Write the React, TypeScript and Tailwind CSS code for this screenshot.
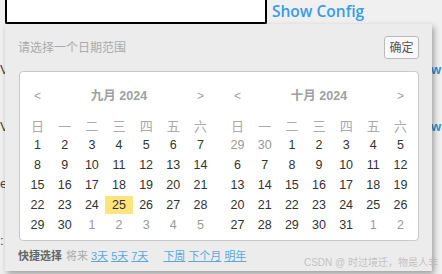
import React from "react";

type Cell = { n: number; other?: boolean; active?: boolean };

const week = ["日", "一", "二", "三", "四", "五", "六"];

function month(lead: number[], count: number, trail: number, active?: number): Cell[] {
  const cells: Cell[] = lead.map((n) => ({ n, other: true }));
  for (let i = 1; i <= count; i++) cells.push({ n: i, active: i === active });
  for (let i = 1; i <= trail; i++) cells.push({ n: i, other: true });
  return cells;
}

const sept = month([], 30, 5, 25);
const oct = month([29, 30], 31, 2);

const cjk = "font-['Liberation_Sans','Noto_Sans_CJK_SC',sans-serif]";

function Calendar({ title, cells }: { title: string; cells: Cell[] }) {
  return (
    <div className="w-[190px]">
      {/* month header */}
      <div className="grid grid-cols-7 h-[20px] items-center text-[#a0a0a0]">
        <span className="text-center text-[12px]">&lt;</span>
        <span className="col-span-5 text-center text-[12.5px] font-bold">{title}</span>
        <span className="text-center text-[12px]">&gt;</span>
      </div>
      {/* weekdays */}
      <div className="mt-[11px] grid grid-cols-7 h-[18px] items-center text-[13px] text-[#aaa]">
        {week.map((w) => (
          <span key={w} className="text-center">
            {w}
          </span>
        ))}
      </div>
      {/* days */}
      <div className="grid grid-cols-7">
        {cells.map((c, i) => (
          <div key={i} className="h-[20px] py-px">
            <div
              className={`h-[18px] flex items-center justify-center text-[12.5px] ${
                c.active ? "bg-[#fde47f]" : ""
              } ${c.other ? "text-[#999]" : "text-[#333]"}`}
            >
              {c.n}
            </div>
          </div>
        ))}
      </div>
    </div>
  );
}

export default function App() {
  return (
    <div className={`relative w-[442px] h-[274px] overflow-hidden bg-[#f0f0f0] ${cjk}`}>
      {/* top bar */}
      <div className="flex items-center h-[24px]">
        <div className="ml-[5px] w-[262px] h-[24px] bg-white border-2 border-t-0 border-black rounded-b-[2px]" />
        <span className="ml-[5px] text-[15.5px] font-semibold text-[#3b9be6] font-['Open_Sans',sans-serif]">
          Show Config
        </span>
      </div>

      {/* page content behind the dropdown */}
      <div className="mt-[17px] flex flex-col text-[13px]">
        {["V", "V", "e:", ":"].map((l, i) => (
          <div key={i} className="h-[57px] flex items-center justify-between">
            <span className="text-[#444]">{l}</span>
            {i < 2 && <span className="mr-px font-bold text-[#2f8fd8]">w</span>}
          </div>
        ))}
      </div>

      {/* date range dropdown */}
      <div className="absolute left-[5px] top-[24px] w-[427px] h-[247px] bg-[#ececec] shadow-[2px_3px_6px_rgba(0,0,0,0.35)] pl-[14px] pr-[13px] pt-[12px]">
        <div className="flex items-center justify-between h-[23px]">
          <span className="ml-[-1px] text-[12px] text-[#aaa]">请选择一个日期范围</span>
          <button className="h-[23px] w-[35px] rounded-[3px] border border-[#bbb] bg-[#f9f9f9] text-[12px] text-[#555]">
            确定
          </button>
        </div>

        <div className="mt-[12px] w-[400px] h-[170px] rounded-[4px] border border-[#c9c9c9] bg-white pt-[14px] px-[4px] flex gap-[10px]">
          <Calendar title="九月 2024" cells={sept} />
          <Calendar title="十月 2024" cells={oct} />
        </div>

        <div className="mt-[8px] ml-[-1px] h-[14px] flex items-center text-[11px] leading-none">
          <span className="font-bold text-[#666]">快捷选择</span>
          <span className="ml-[4px] text-[#aaa]">将来</span>
          <div className="ml-[3px] flex gap-[3px] text-[#5aa9dc] underline">
            <span>3天</span>
            <span>5天</span>
            <span>7天</span>
          </div>
          <div className="ml-[15px] flex gap-[3px] text-[#5aa9dc] underline">
            <span>下周</span>
            <span>下个月</span>
            <span>明年</span>
          </div>
        </div>
      </div>

      {/* watermark */}
      <span className="absolute right-[4px] top-[255px] text-[10px] text-[rgba(185,185,185,0.85)] whitespace-nowrap">
        CSDN @ 时过境迁，物是人非
      </span>
    </div>
  );
}
